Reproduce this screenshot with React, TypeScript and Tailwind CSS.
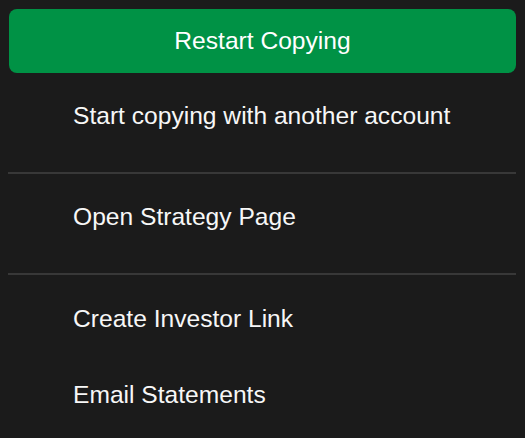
export default function App() {
  const item = 'flex items-center h-[76px] pl-[73px] text-[24.6px] text-[#f7f7f7]';

  return (
    <div className="w-[525px] h-[438px] bg-[#1b1b1b] overflow-hidden pt-[9px] pl-[8px] pr-[9px] font-['Liberation_Sans',Arial,sans-serif]">
      <button className="ml-px w-[507px] h-[64px] rounded-lg bg-[#009245] text-white text-[24.6px] flex items-center justify-center">
        Restart Copying
      </button>

      <div className={`${item} -ml-[8px] mt-[5px]`}>Start copying with another account</div>
      <div className="mt-[18px] h-[2px] bg-[#383838]" />

      <div className={`${item} -ml-[8px] mt-[5px]`}>Open Strategy Page</div>
      <div className="mt-[18px] h-[2px] bg-[#383838]" />

      <div className={`${item} -ml-[8px] mt-[6px]`}>Create Investor Link</div>
      <div className={`${item} -ml-[8px]`}>Email Statements</div>
    </div>
  );
}
